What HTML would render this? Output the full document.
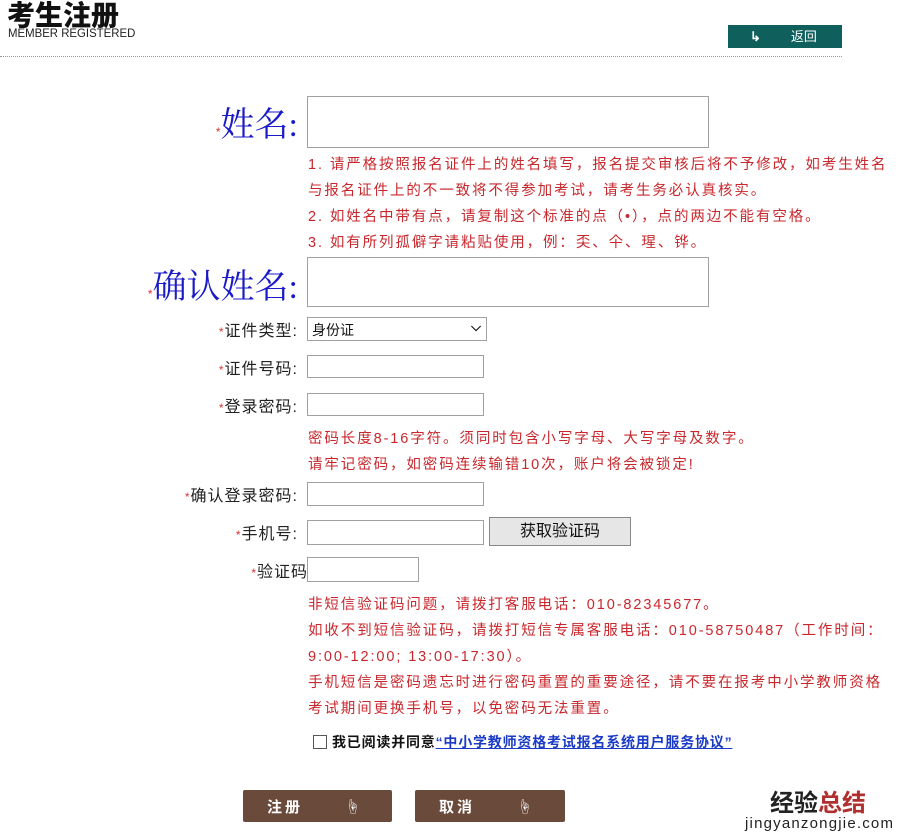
<!DOCTYPE html>
<html><head><meta charset="utf-8"><style>
body{margin:0;width:901px;height:837px;background:#fff;position:relative;font-family:"Liberation Sans","Noto Sans CJK SC",sans-serif;overflow:hidden}
.a{position:absolute;white-space:nowrap}
.red{color:#c8282d;font-size:14.5px;letter-spacing:1.9px}
.lab{font-size:16px;color:#222;text-align:right;width:200px;letter-spacing:1px}
.st{color:#d33;font-size:12px}
.inp{position:absolute;border:1px solid #a0a0a0;background:#fff;box-sizing:border-box}
.big{color:#1a1ac8;font-family:"Liberation Serif","Noto Serif CJK SC",serif;font-size:34px;text-align:right}
.btn{position:absolute;background:#6a4a3a;color:#fff;font-weight:bold;font-size:15px;border-radius:2px;box-sizing:border-box;padding:6px 0 0 24px;letter-spacing:3px}
</style></head><body>
<div class="a" style="left:7px;top:-6px;font-size:28px;font-weight:900;color:#111">考生注册</div>
<div class="a" style="left:8px;top:26px;font-size:12px;color:#222;transform:scaleX(0.95);transform-origin:left">MEMBER REGISTERED</div>
<div class="a" style="left:728px;top:25px;width:114px;height:23px;background:#0f5f5c;color:#fff;font-size:13px;line-height:23px"><span style="margin-left:22px;font-weight:bold">↳</span><span style="margin-left:30px">返回</span></div>
<div class="a" style="left:0;top:56px;width:842px;border-top:1px dotted #999"></div>

<div class="a big" style="left:98px;top:97px;width:200px"><span class="st" style="font-family:'Liberation Sans'">*</span>姓名:</div>
<div class="inp" style="left:307px;top:96px;width:402px;height:52px"></div>
<div class="a red" style="left:308px;top:152px;line-height:26px">1. 请严格按照报名证件上的姓名填写，报名提交审核后将不予修改，如考生姓名<br>与报名证件上的不一致将不得参加考试，请考生务必认真核实。<br>2. 如姓名中带有点，请复制这个标准的点（•），点的两边不能有空格。<br>3. 如有所列孤僻字请粘贴使用，例：奀、仐、瑆、铧。</div>
<div class="a big" style="left:98px;top:259px;width:200px"><span class="st" style="font-family:'Liberation Sans'">*</span>确认姓名:</div>
<div class="inp" style="left:307px;top:257px;width:402px;height:50px"></div>

<div class="a lab" style="left:98px;top:317px"><span class="st">*</span>证件类型:</div>
<div class="inp" style="left:307px;top:317px;width:180px;height:24px;font-size:14px;padding:2px 4px;color:#111">身份证<span style="position:absolute;right:5px;top:1px;font-size:13px;font-weight:bold">⌵</span></div>
<div class="a lab" style="left:98px;top:355px"><span class="st">*</span>证件号码:</div>
<div class="inp" style="left:307px;top:355px;width:177px;height:23px"></div>
<div class="a lab" style="left:98px;top:393px"><span class="st">*</span>登录密码:</div>
<div class="inp" style="left:307px;top:393px;width:177px;height:23px"></div>
<div class="a red" style="left:308px;top:426px;line-height:26px">密码长度8-16字符。须同时包含小写字母、大写字母及数字。<br>请牢记密码，如密码连续输错10次，账户将会被锁定!</div>
<div class="a lab" style="left:98px;top:482px"><span class="st">*</span>确认登录密码:</div>
<div class="inp" style="left:307px;top:482px;width:177px;height:24px"></div>
<div class="a lab" style="left:98px;top:520px"><span class="st">*</span>手机号:</div>
<div class="inp" style="left:307px;top:520px;width:177px;height:25px"></div>
<div class="inp" style="left:489px;top:517px;width:142px;height:29px;background:#e6e6e6;border-color:#888;font-size:16px;text-align:center;line-height:27px;color:#111">获取验证码</div>
<div class="a lab" style="left:108px;top:558px"><span class="st">*</span>验证码</div>
<div class="inp" style="left:307px;top:557px;width:112px;height:25px"></div>
<div class="a red" style="left:308px;top:592px;line-height:26px">非短信验证码问题，请拨打客服电话：010-82345677。<br>如收不到短信验证码，请拨打短信专属客服电话：010-58750487（工作时间：<br>9:00-12:00; 13:00-17:30）。<br>手机短信是密码遗忘时进行密码重置的重要途径，请不要在报考中小学教师资格<br>考试期间更换手机号，以免密码无法重置。</div>

<div class="a" style="left:313px;top:735px;width:12px;height:12px;border:1px solid #555"></div>
<div class="a" style="left:332px;top:732px;font-size:14px;font-weight:bold;color:#111;letter-spacing:0.8px">我已阅读并同意<span style="color:#1a3ac8;text-decoration:underline">“中小学教师资格考试报名系统用户服务协议”</span></div>

<div class="btn" style="left:243px;top:790px;width:149px;height:32px">注册<span style="margin-left:42px;font-weight:normal">☝</span></div>
<div class="btn" style="left:415px;top:790px;width:150px;height:32px">取消<span style="margin-left:42px;font-weight:normal">☝</span></div>

<div class="a" style="left:770px;top:783px;font-size:24px;font-weight:bold;color:#222">经验<span style="color:#b03030">总结</span></div>
<div class="a" style="left:745px;top:815px;font-size:15px;color:#222;letter-spacing:1.2px">jingyanzongjie.com</div>
</body></html>
